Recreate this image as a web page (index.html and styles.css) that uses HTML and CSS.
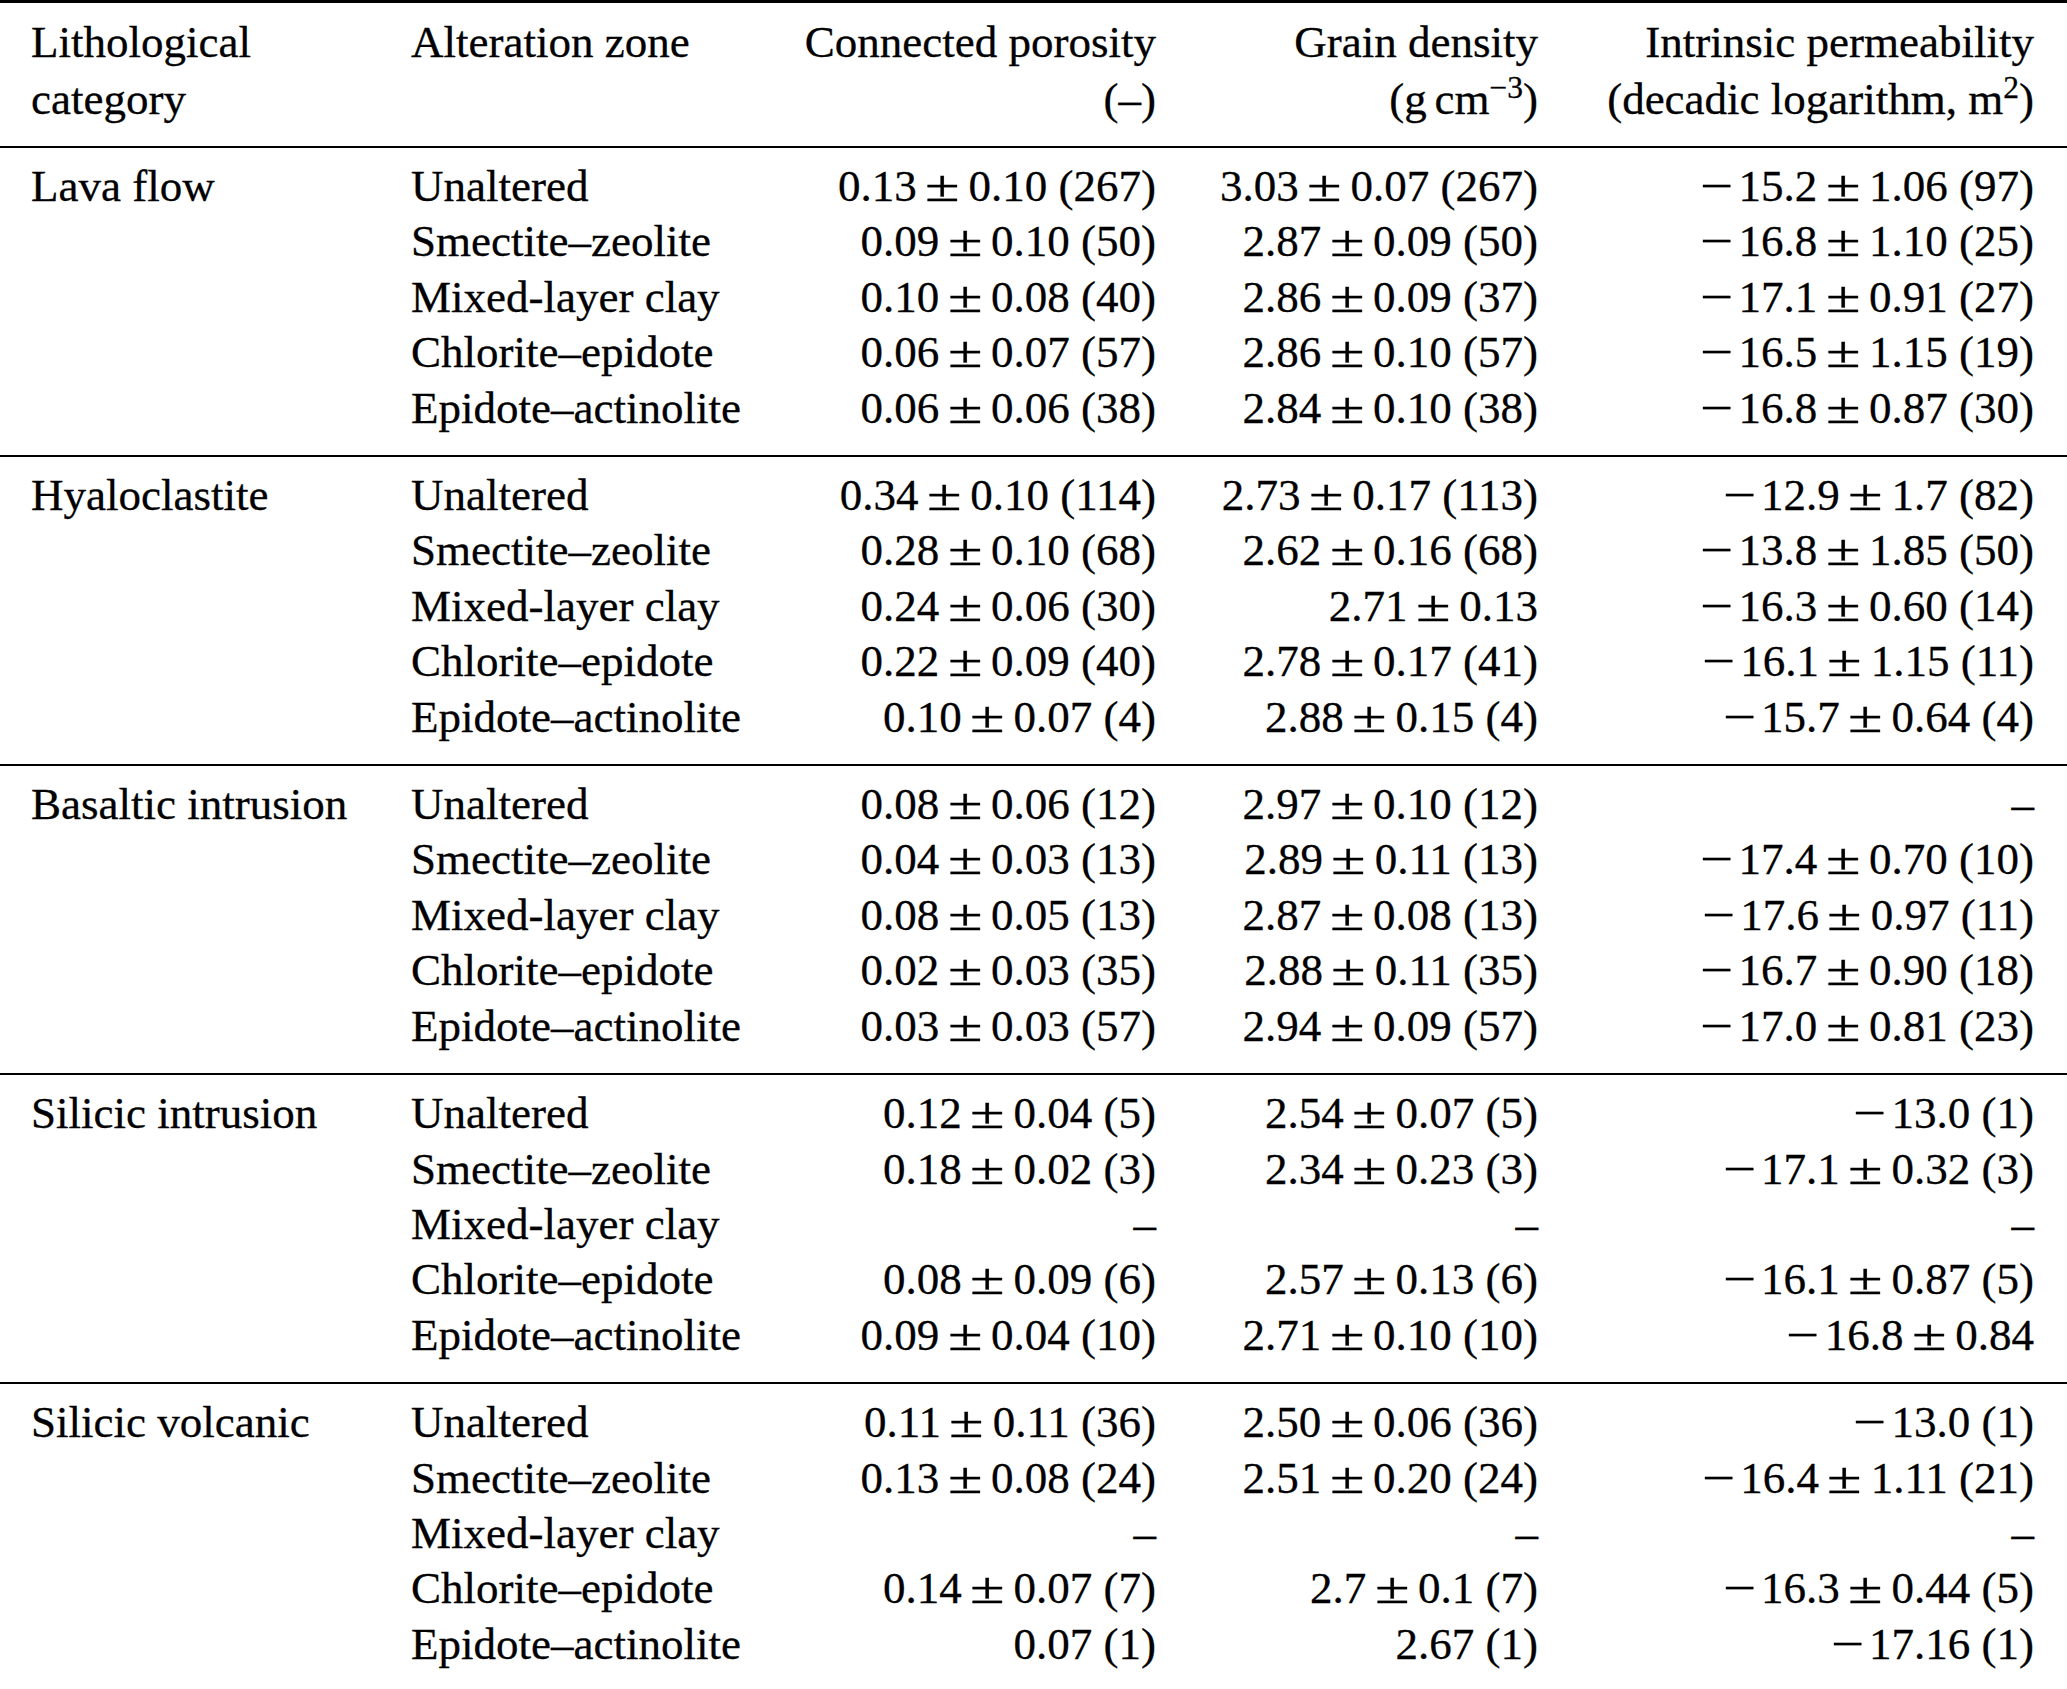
FILE: index.html
```html
<!DOCTYPE html>
<html lang="en">
<head>
<meta charset="utf-8">
<title>Rock properties by lithology and alteration zone</title>
<link rel="stylesheet" href="styles.css">
</head>
<body>
<table class="tbl">
  <colgroup>
    <col class="c1"><col class="c2"><col class="c3"><col class="c4"><col class="c5">
  </colgroup>
  <thead>
    <tr>
      <th class="l first">Lithological<br>category</th>
      <th class="l">Alteration zone</th>
      <th class="r">Connected porosity<br>(–)</th>
      <th class="r">Grain density<br>(g<span class="thin"></span>cm<sup>−3</sup>)</th>
      <th class="r last">Intrinsic permeability<br>(decadic logarithm, m<sup>2</sup>)</th>
    </tr>
  </thead>
  <tbody class="sec">
    <tr><td class="l first">Lava flow</td><td class="l">Unaltered</td><td class="r">0.13<span class="pm">±</span>0.10 (267)</td><td class="r">3.03<span class="pm">±</span>0.07 (267)</td><td class="r last"><span class="neg">−</span>15.2<span class="pm">±</span>1.06 (97)</td></tr>
    <tr><td class="l first"></td><td class="l">Smectite–zeolite</td><td class="r">0.09<span class="pm">±</span>0.10 (50)</td><td class="r">2.87<span class="pm">±</span>0.09 (50)</td><td class="r last"><span class="neg">−</span>16.8<span class="pm">±</span>1.10 (25)</td></tr>
    <tr><td class="l first"></td><td class="l">Mixed-layer clay</td><td class="r">0.10<span class="pm">±</span>0.08 (40)</td><td class="r">2.86<span class="pm">±</span>0.09 (37)</td><td class="r last"><span class="neg">−</span>17.1<span class="pm">±</span>0.91 (27)</td></tr>
    <tr><td class="l first"></td><td class="l">Chlorite–epidote</td><td class="r">0.06<span class="pm">±</span>0.07 (57)</td><td class="r">2.86<span class="pm">±</span>0.10 (57)</td><td class="r last"><span class="neg">−</span>16.5<span class="pm">±</span>1.15 (19)</td></tr>
    <tr><td class="l first"></td><td class="l">Epidote–actinolite</td><td class="r">0.06<span class="pm">±</span>0.06 (38)</td><td class="r">2.84<span class="pm">±</span>0.10 (38)</td><td class="r last"><span class="neg">−</span>16.8<span class="pm">±</span>0.87 (30)</td></tr>
  </tbody>
  <tbody class="sec">
    <tr><td class="l first">Hyaloclastite</td><td class="l">Unaltered</td><td class="r">0.34<span class="pm">±</span>0.10 (114)</td><td class="r">2.73<span class="pm">±</span>0.17 (113)</td><td class="r last"><span class="neg">−</span>12.9<span class="pm">±</span>1.7 (82)</td></tr>
    <tr><td class="l first"></td><td class="l">Smectite–zeolite</td><td class="r">0.28<span class="pm">±</span>0.10 (68)</td><td class="r">2.62<span class="pm">±</span>0.16 (68)</td><td class="r last"><span class="neg">−</span>13.8<span class="pm">±</span>1.85 (50)</td></tr>
    <tr><td class="l first"></td><td class="l">Mixed-layer clay</td><td class="r">0.24<span class="pm">±</span>0.06 (30)</td><td class="r">2.71<span class="pm">±</span>0.13</td><td class="r last"><span class="neg">−</span>16.3<span class="pm">±</span>0.60 (14)</td></tr>
    <tr><td class="l first"></td><td class="l">Chlorite–epidote</td><td class="r">0.22<span class="pm">±</span>0.09 (40)</td><td class="r">2.78<span class="pm">±</span>0.17 (41)</td><td class="r last"><span class="neg">−</span>16.1<span class="pm">±</span>1.15 (11)</td></tr>
    <tr><td class="l first"></td><td class="l">Epidote–actinolite</td><td class="r">0.10<span class="pm">±</span>0.07 (4)</td><td class="r">2.88<span class="pm">±</span>0.15 (4)</td><td class="r last"><span class="neg">−</span>15.7<span class="pm">±</span>0.64 (4)</td></tr>
  </tbody>
  <tbody class="sec">
    <tr><td class="l first">Basaltic intrusion</td><td class="l">Unaltered</td><td class="r">0.08<span class="pm">±</span>0.06 (12)</td><td class="r">2.97<span class="pm">±</span>0.10 (12)</td><td class="r last">–</td></tr>
    <tr><td class="l first"></td><td class="l">Smectite–zeolite</td><td class="r">0.04<span class="pm">±</span>0.03 (13)</td><td class="r">2.89<span class="pm">±</span>0.11 (13)</td><td class="r last"><span class="neg">−</span>17.4<span class="pm">±</span>0.70 (10)</td></tr>
    <tr><td class="l first"></td><td class="l">Mixed-layer clay</td><td class="r">0.08<span class="pm">±</span>0.05 (13)</td><td class="r">2.87<span class="pm">±</span>0.08 (13)</td><td class="r last"><span class="neg">−</span>17.6<span class="pm">±</span>0.97 (11)</td></tr>
    <tr><td class="l first"></td><td class="l">Chlorite–epidote</td><td class="r">0.02<span class="pm">±</span>0.03 (35)</td><td class="r">2.88<span class="pm">±</span>0.11 (35)</td><td class="r last"><span class="neg">−</span>16.7<span class="pm">±</span>0.90 (18)</td></tr>
    <tr><td class="l first"></td><td class="l">Epidote–actinolite</td><td class="r">0.03<span class="pm">±</span>0.03 (57)</td><td class="r">2.94<span class="pm">±</span>0.09 (57)</td><td class="r last"><span class="neg">−</span>17.0<span class="pm">±</span>0.81 (23)</td></tr>
  </tbody>
  <tbody class="sec">
    <tr><td class="l first">Silicic intrusion</td><td class="l">Unaltered</td><td class="r">0.12<span class="pm">±</span>0.04 (5)</td><td class="r">2.54<span class="pm">±</span>0.07 (5)</td><td class="r last"><span class="neg">−</span>13.0 (1)</td></tr>
    <tr><td class="l first"></td><td class="l">Smectite–zeolite</td><td class="r">0.18<span class="pm">±</span>0.02 (3)</td><td class="r">2.34<span class="pm">±</span>0.23 (3)</td><td class="r last"><span class="neg">−</span>17.1<span class="pm">±</span>0.32 (3)</td></tr>
    <tr><td class="l first"></td><td class="l">Mixed-layer clay</td><td class="r">–</td><td class="r">–</td><td class="r last">–</td></tr>
    <tr><td class="l first"></td><td class="l">Chlorite–epidote</td><td class="r">0.08<span class="pm">±</span>0.09 (6)</td><td class="r">2.57<span class="pm">±</span>0.13 (6)</td><td class="r last"><span class="neg">−</span>16.1<span class="pm">±</span>0.87 (5)</td></tr>
    <tr><td class="l first"></td><td class="l">Epidote–actinolite</td><td class="r">0.09<span class="pm">±</span>0.04 (10)</td><td class="r">2.71<span class="pm">±</span>0.10 (10)</td><td class="r last"><span class="neg">−</span>16.8<span class="pm">±</span>0.84</td></tr>
  </tbody>
  <tbody class="sec">
    <tr><td class="l first">Silicic volcanic</td><td class="l">Unaltered</td><td class="r">0.11<span class="pm">±</span>0.11 (36)</td><td class="r">2.50<span class="pm">±</span>0.06 (36)</td><td class="r last"><span class="neg">−</span>13.0 (1)</td></tr>
    <tr><td class="l first"></td><td class="l">Smectite–zeolite</td><td class="r">0.13<span class="pm">±</span>0.08 (24)</td><td class="r">2.51<span class="pm">±</span>0.20 (24)</td><td class="r last"><span class="neg">−</span>16.4<span class="pm">±</span>1.11 (21)</td></tr>
    <tr><td class="l first"></td><td class="l">Mixed-layer clay</td><td class="r">–</td><td class="r">–</td><td class="r last">–</td></tr>
    <tr><td class="l first"></td><td class="l">Chlorite–epidote</td><td class="r">0.14<span class="pm">±</span>0.07 (7)</td><td class="r">2.7<span class="pm">±</span>0.1 (7)</td><td class="r last"><span class="neg">−</span>16.3<span class="pm">±</span>0.44 (5)</td></tr>
    <tr><td class="l first"></td><td class="l">Epidote–actinolite</td><td class="r">0.07 (1)</td><td class="r">2.67 (1)</td><td class="r last"><span class="neg">−</span>17.16 (1)</td></tr>
  </tbody>
</table>
</body>
</html>
```

FILE: styles.css
```css
html, body {
  margin: 0;
  padding: 0;
  background: #ffffff;
}

.tbl {
  width: 2067px;
  border-collapse: collapse;
  table-layout: fixed;
  font-family: "Liberation Serif", "Times New Roman", serif;
  font-size: 45px;
  line-height: 55.4px;
  color: #000;
  -webkit-text-stroke: 0.3px #000;
}

.c1 { width: 411px; }
.c2 { width: 349px; }
.c3 { width: 396px; }
.c4 { width: 382px; }
.c5 { width: 529px; }

.tbl th,
.tbl td {
  padding: 0;
  vertical-align: top;
  white-space: nowrap;
  font-weight: normal;
}

.tbl .l { text-align: left; }
.tbl .r { text-align: right; }
.tbl .first { padding-left: 31px; }
.tbl .last { padding-right: 33px; }

.tbl thead {
  border-top: 3px solid #000;
  border-bottom: 2px solid #000;
}

.tbl thead th {
  line-height: 57px;
  padding-top: 11px;
  padding-bottom: 18px;
}

.tbl .sec + .sec {
  border-top: 2px solid #000;
}

.tbl .sec:last-child {
  border-bottom: 3px solid #000;
}

.tbl .sec tr:first-child td { padding-top: 11px; }
.tbl .sec tr:last-child td { padding-bottom: 19px; }

.pm {
  display: inline-block;
  margin: 0 0.3em;
  transform: scaleX(1.4);
}

.neg {
  display: inline-block;
  margin: 0 0.2em 0 0.1em;
  transform: scaleX(1.3);
}

.thin {
  display: inline-block;
  width: 0.17em;
}

sup {
  font-size: 0.7em;
  line-height: 0;
  vertical-align: 0.5em;
}
```
